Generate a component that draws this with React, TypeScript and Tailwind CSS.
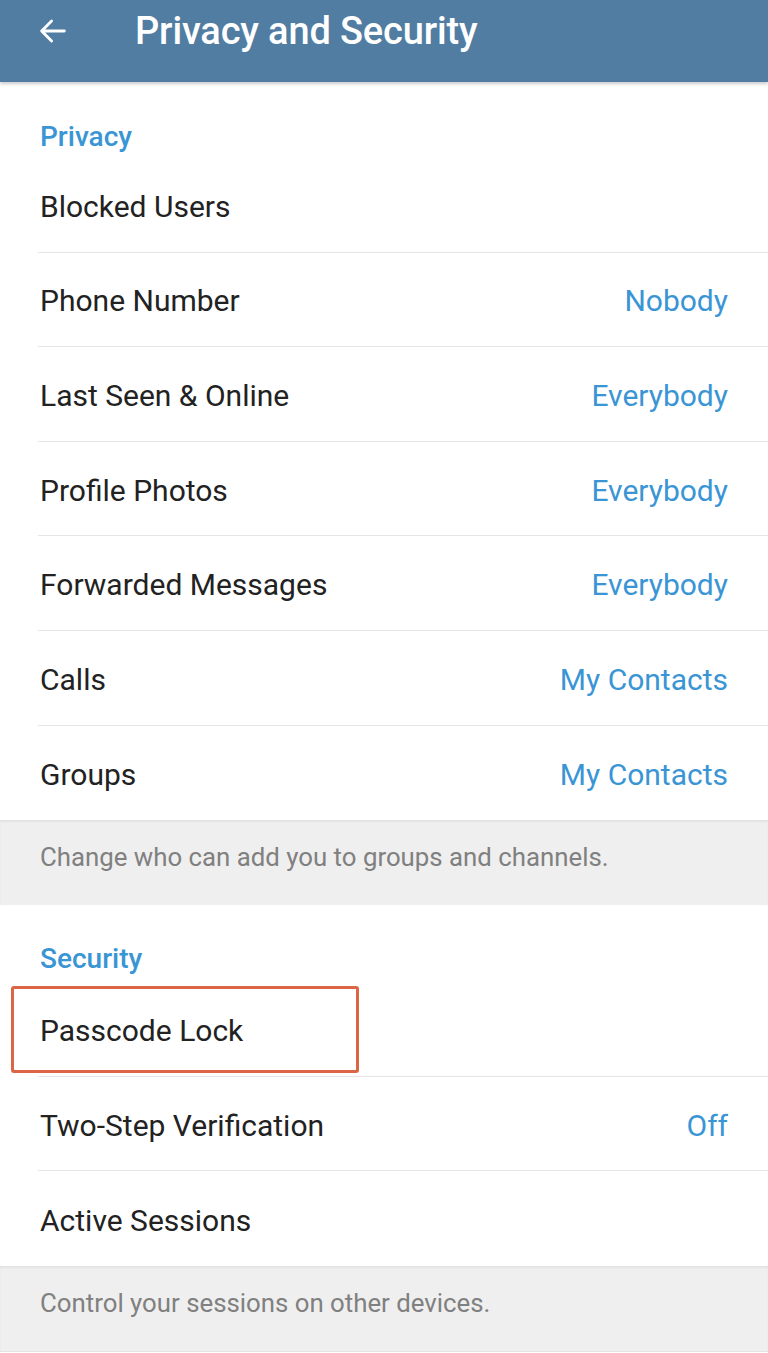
import React from "react";

const font = { fontFamily: "Roboto, 'Noto Sans', sans-serif" };

function Row({ label, value, last, highlight }: { label: string; value?: string; last?: boolean; highlight?: boolean }) {
  return (
    <div className="relative h-[94.6px] pl-[38px]">
      <div className={`flex h-full items-center justify-between pl-[2px] pr-[40px] pt-[3px] ${last ? "" : "border-b border-[#e6e6e6]"}`}>
        <span className="text-[30px] text-[#222222]">{label}</span>
        {value && <span className="text-[30px] text-[#3a95d5]">{value}</span>}
      </div>
      {highlight && (
        <div className="absolute left-[11px] top-[4px] h-[87px] w-[348px] rounded-[3px] border-[3px] border-[#dc6546]" />
      )}
    </div>
  );
}

export default function App() {
  return (
    <div className="w-[768px] h-[1353px] bg-white overflow-hidden" style={font}>
      <div className="relative z-10 h-[82px] bg-[#517da2] shadow-[0_2px_3px_rgba(0,0,0,0.2)] flex items-start">
        <div className="pl-[36px] pt-[14px] flex items-center">
          <svg width="34" height="34" viewBox="0 0 24 24" fill="none" stroke="white" strokeWidth="2" strokeLinecap="round" strokeLinejoin="round">
            <path d="M20 12H4M11 5l-7 7 7 7" />
          </svg>
        </div>
        <div className="pl-[65px] pt-[3px] text-[38px] font-medium text-white tracking-[-0.15px]">Privacy and Security</div>
      </div>

      <div className="bg-white">
        <div className="h-[76px] pl-[40px] flex items-end pb-0">
          <span className="text-[28px] font-medium text-[#3a95d5]">Privacy</span>
        </div>
        <Row label="Blocked Users" />
        <Row label="Phone Number" value="Nobody" />
        <Row label="Last Seen & Online" value="Everybody" />
        <Row label="Profile Photos" value="Everybody" />
        <Row label="Forwarded Messages" value="Everybody" />
        <Row label="Calls" value="My Contacts" />
        <Row label="Groups" value="My Contacts" last />
      </div>

      <div className="h-[85px] bg-[#efefef] pl-[40px] pb-[10px] flex items-center shadow-[inset_0_2px_2px_rgba(0,0,0,0.05)]">
        <span className="text-[25.8px] text-[#808080]">Change who can add you to groups and channels.</span>
      </div>

      <div className="bg-white">
        <div className="h-[77px] pl-[40px] flex items-end pb-[2px]">
          <span className="text-[28px] font-medium text-[#3a95d5]">Security</span>
        </div>
        <Row label="Passcode Lock" highlight />
        <Row label="Two-Step Verification" value="Off" />
        <Row label="Active Sessions" last />
      </div>

      <div className="h-[86px] bg-[#efefef] pl-[40px] pb-[10px] flex items-center border-b border-[#e4e4e4] shadow-[inset_0_2px_2px_rgba(0,0,0,0.05)]">
        <span className="text-[25.8px] text-[#808080]">Control your sessions on other devices.</span>
      </div>
    </div>
  );
}
